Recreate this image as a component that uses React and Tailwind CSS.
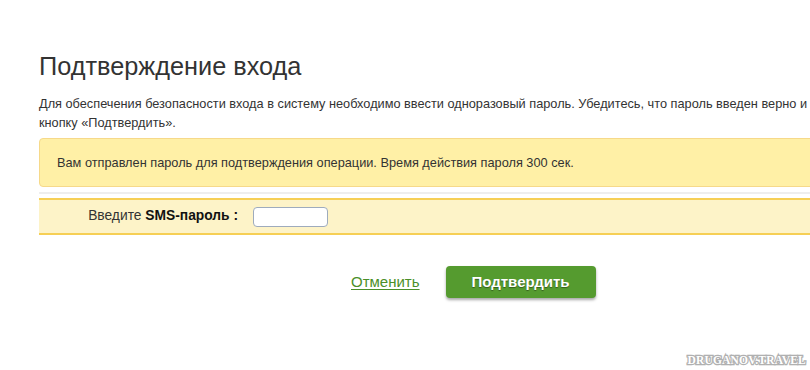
import React from 'react';

export default function App() {
  return (
    <div className="relative w-[810px] h-[370px] overflow-hidden bg-white text-[#333] font-['Liberation_Sans',Arial,sans-serif]">
      <div className="pl-[39px] pt-[49px] w-[900px]">
        <h1 className="text-[25.3px] leading-[34px] text-[#333]">Подтверждение входа</h1>

        <div className="mt-[11px] text-[12.75px] leading-[19px]">
          <p className="whitespace-nowrap">Для обеспечения безопасности входа в систему необходимо ввести одноразовый пароль. Убедитесь, что пароль введен верно и нажмите</p>
          <p>кнопку «Подтвердить».</p>
        </div>

        <div className="mt-[6px] h-[49px] flex items-center pl-[17px] bg-[#fff0a6] border border-[#f6d98a] rounded-l-[4px] text-[12.75px]">
          Вам отправлен пароль для подтверждения операции. Время действия пароля 300 сек.
        </div>

        <div className="mt-[5px] h-[2px] bg-[#eeeeee]" />

        <div className="mt-[4px] h-[37px] flex items-center bg-[#fdf3c8] border-y-2 border-[#f6cf55] text-[13.8px]">
          <div className="w-[199px] text-right">
            Введите <b className="font-bold text-[#111]">SMS-пароль :</b>
          </div>
          <div className="ml-[15px] w-[75px] h-[20px] bg-white border border-[#9eabbd] rounded-[4px]" />
        </div>

        <div className="mt-[31px] flex items-center">
          <a href="#" className="ml-[312px] text-[15px] text-[#4b8f28] underline underline-offset-2">Отменить</a>
          <button className="ml-[26px] w-[150px] h-[32px] rounded-[4px] bg-[#559b2f] text-white font-bold text-[15px] shadow-[0_2px_3px_rgba(0,0,0,0.35)] [text-shadow:0_1px_1px_rgba(0,0,0,0.4)]">
            Подтвердить
          </button>
        </div>
      </div>

      <div className="absolute right-[4px] bottom-[1px] text-[11.5px] font-bold tracking-[0.2px] text-white font-['Liberation_Serif',serif] [-webkit-text-stroke:2.5px_#b0b0b0] [paint-order:stroke_fill]">
        DRUGANOV.TRAVEL
      </div>
    </div>
  );
}
